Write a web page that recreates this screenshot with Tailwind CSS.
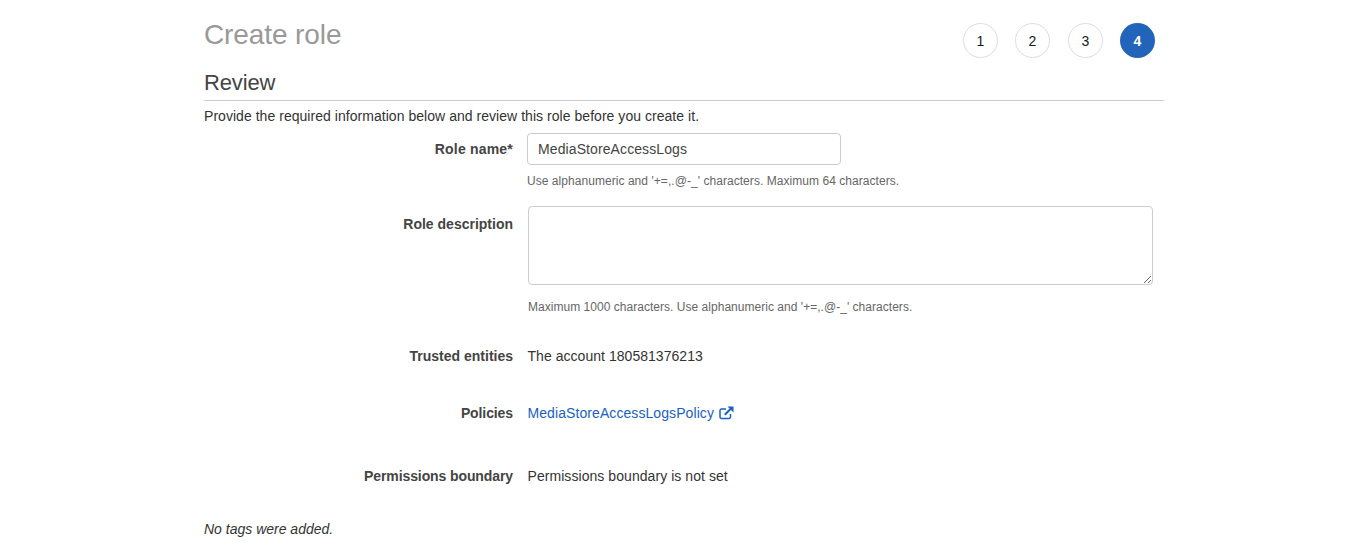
<!DOCTYPE html>
<html lang="en">
<head>
  <meta charset="UTF-8" />
  <title>Create role</title>
  <script src="https://cdn.jsdelivr.net/npm/@tailwindcss/browser@4"></script>
</head>
<body class="bg-white h-[553px] overflow-hidden font-['Liberation_Sans',Arial,sans-serif] text-[14px] leading-[20px] text-[#333]">

  <div class="w-[960px] ml-[204px] pt-[18px]">
    <!-- heading + steps -->
    <div class="flex justify-between h-[40px]">
      <h1 class="text-[28px] leading-[34px] text-[#999] tracking-[-0.1px]">Create role</h1>
      <div class="flex pt-[5px] pr-[9px] text-[14px]">
        <div class="w-[35px] h-[35px] rounded-full border border-[#ddd] flex items-center justify-center text-[#16191f]">1</div>
        <div class="w-[35px] h-[35px] rounded-full border border-[#ddd] flex items-center justify-center text-[#16191f] ml-[17px]">2</div>
        <div class="w-[35px] h-[35px] rounded-full border border-[#ddd] flex items-center justify-center text-[#16191f] ml-[18px]">3</div>
        <div class="w-[35px] h-[35px] rounded-full bg-[#2364bb] flex items-center justify-center text-white font-bold ml-[17px]">4</div>
      </div>
    </div>

    <h2 class="text-[22px] leading-[26px] text-[#444] tracking-[-0.15px] mt-[12px] pb-[4px] border-b border-[#ccc]">Review</h2>
    <p class="mt-[5px] text-[#333] tracking-[0.04px]">Provide the required information below and review this role before you create it.</p>

    <!-- form -->
    <div class="grid grid-cols-[309px_1fr] gap-x-[14px] mt-[7px]">
      <div class="text-right font-bold text-[#444] pt-[6px] tracking-[0.2px]">Role name*</div>
      <div>
        <input value="MediaStoreAccessLogs" class="block w-[314px] h-[32px] px-[10px] border border-[#ccc] rounded-[4px] text-[14px] tracking-[0.1px] text-[#444] bg-white" />
        <p class="text-[12px] leading-[16px] text-[#666] mt-[8px] tracking-[0.05px]">Use alphanumeric and '+=,.@-_' characters. Maximum 64 characters.</p>
      </div>

      <div class="text-right font-bold text-[#444] mt-[17px] pt-[8px]">Role description</div>
      <div class="mt-[17px]">
        <textarea class="block w-[625px] h-[79px] ml-[1px] border border-[#ccc] rounded-[4px] bg-white"></textarea>
        <p class="text-[12px] leading-[16px] text-[#666] mt-[14px] ml-[1px] tracking-[0.03px]">Maximum 1000 characters. Use alphanumeric and '+=,.@-_' characters.</p>
      </div>

      <div class="text-right font-bold text-[#444] mt-[31px]">Trusted entities</div>
      <div class="mt-[31px] pl-[0.5px] tracking-[0.04px]">The account 180581376213</div>

      <div class="text-right font-bold text-[#444] mt-[37px] tracking-[-0.1px]">Policies</div>
      <div class="mt-[37px] pl-[0.5px] flex items-center text-[#1a62c0] tracking-[0.08px]">
        MediaStoreAccessLogsPolicy
        <svg class="ml-[5px] w-[15px] h-[15px]" viewBox="0 0 15 15" fill="none" stroke="#1a62c0" stroke-width="1.5">
          <path d="M11.5 8v3a1.5 1.5 0 0 1-1.5 1.5H2.5A1.5 1.5 0 0 1 1 11V4.5A1.5 1.5 0 0 1 2.5 3H7" />
          <path d="M5.8 8.7L11.5 3" stroke-width="2" />
          <path d="M8.5 0.5h6v6z" fill="#1a62c0" stroke="none" />
        </svg>
      </div>

      <div class="text-right font-bold text-[#444] mt-[43px] tracking-[-0.1px]">Permissions boundary</div>
      <div class="mt-[43px] pl-[0.5px] tracking-[0.06px]">Permissions boundary is not set</div>
    </div>

    <p class="italic text-[#333] mt-[33px]">No tags were added.</p>
  </div>

</body>
</html>
